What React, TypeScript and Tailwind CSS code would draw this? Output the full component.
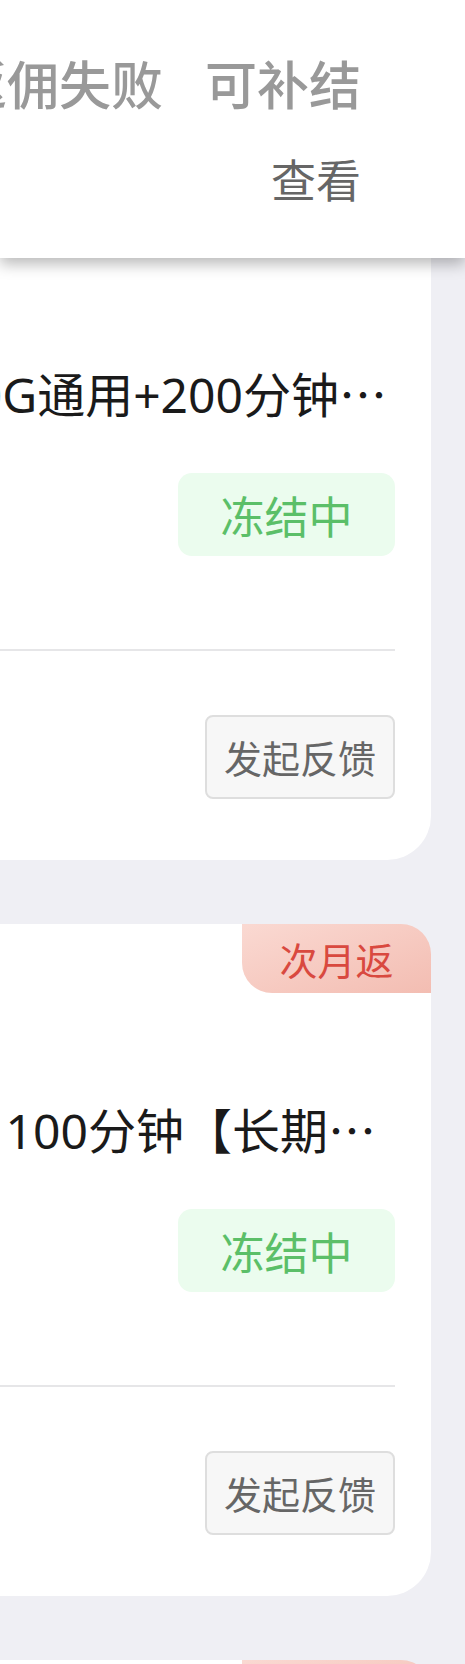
import React from "react";

const cjk = '"Noto Sans CJK SC", sans-serif';

const tabs = ["全部", "待结算", "已结算", "返佣失败", "可补结"];

const orders = [
  { title: "电信星卡 29元 100G通用+200分钟", tag: "", titleGap: "mr-[8px]" },
  { title: "联通大王卡 19元 135G通用 100分钟【长期", tag: "次月返", titleGap: "mr-[19px]" },
  { title: "移动花卡 39元 155G通用 100分钟【长期", tag: "次月返", titleGap: "mr-[19px]" },
];

function OrderCard({ title, tag, titleGap }: { title: string; tag: string; titleGap: string }) {
  return (
    <div className="relative w-[820px] shrink-0 h-[672px] bg-white rounded-tr-[44px] rounded-br-[44px] flex flex-col items-end pt-[172px] pr-[36px]">
      {tag && (
        <div
          className="absolute top-0 right-0 w-[189px] h-[69px] rounded-tr-[30px] rounded-bl-[30px] bg-gradient-to-br from-[#fad9d2] to-[#f3bdb2] flex items-center justify-center text-[38px] leading-none text-[#d9493f]"
          style={{ fontFamily: cjk }}
        >
          {tag}
        </div>
      )}
      <div className={`h-[64px] leading-[64px] text-[48px] text-[#1a1a1a] whitespace-nowrap ${titleGap}`}>
        {title}
        <span style={{ fontFamily: cjk }}>…</span>
      </div>
      <div
        className="mt-[49px] w-[217px] h-[83px] rounded-[14px] bg-[#ebfcee] flex items-center justify-center text-[44px] leading-none text-[#5bbf68]"
        style={{ fontFamily: cjk }}
      >
        冻结中
      </div>
      <div className="mt-[93px] w-[784px] h-[2px] bg-[#e6e6e8]" />
      <button
        className="mt-[64px] w-[190px] h-[84px] border-2 border-[#dedede] bg-[#f7f7f7] rounded-[8px] flex items-center justify-center text-[38px] leading-none text-[#666666]"
        style={{ fontFamily: cjk }}
      >
        发起反馈
      </button>
    </div>
  );
}

export default function App() {
  return (
    <div
      className="w-[465px] h-[1664px] overflow-hidden bg-[#efeff4]"
      style={{ fontFamily: '"Noto Sans", "Noto Sans CJK SC", sans-serif' }}
    >
      <div
        className="relative z-10 h-[258px] bg-white shadow-[0_6px_14px_rgba(0,0,0,0.28)] pt-[47px] pr-[104px] flex flex-col items-end"
        style={{ fontFamily: cjk }}
      >
        <div className="flex justify-end gap-[42px] h-[72px] leading-[72px] text-[52px] font-medium text-[#999999] whitespace-nowrap">
          {tabs.map((t) => (
            <span key={t} className="shrink-0">{t}</span>
          ))}
        </div>
        <div className="mt-[28px] h-[64px] leading-[64px] text-[45px] text-[#666666]">查看</div>
      </div>
      <div className="-mt-[70px] flex flex-col items-end gap-[64px] pr-[34px]">
        {orders.map((o, i) => (
          <OrderCard key={i} {...o} />
        ))}
      </div>
    </div>
  );
}
